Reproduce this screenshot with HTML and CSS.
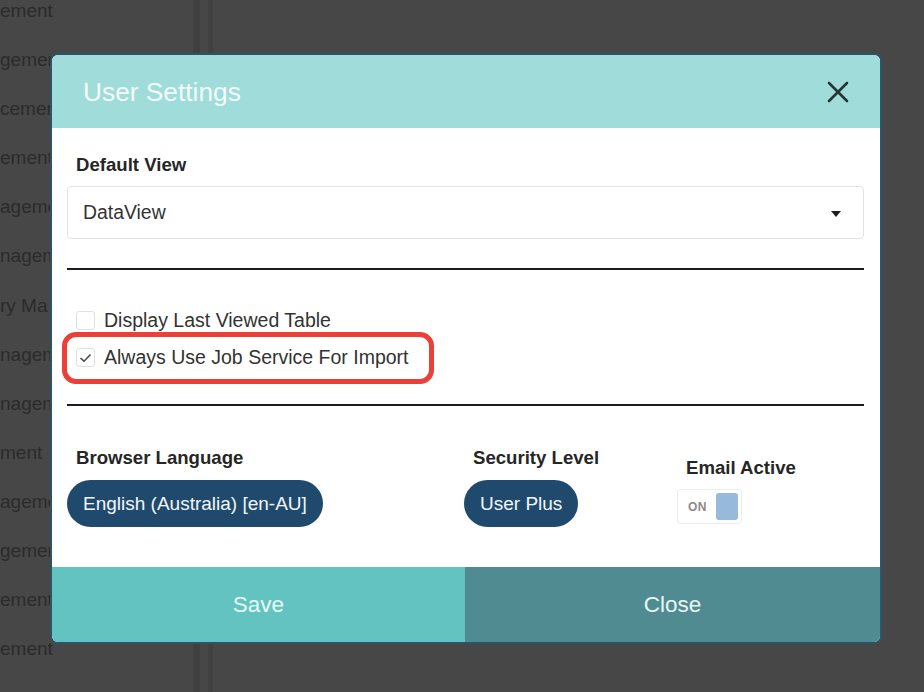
FILE: index.html
```html
<!DOCTYPE html>
<html lang="en">
<head>
<meta charset="utf-8">
<title>User Settings</title>
<link rel="stylesheet" href="styles.css">
</head>
<body>
<div class="app">
  <nav class="sidebar">
    <div class="nav-item">ement</div>
    <div class="nav-item">gement</div>
    <div class="nav-item">cement</div>
    <div class="nav-item">ement</div>
    <div class="nav-item">ageme</div>
    <div class="nav-item">nagem</div>
    <div class="nav-item">ry Ma</div>
    <div class="nav-item">nagem</div>
    <div class="nav-item">nagem</div>
    <div class="nav-item">ment</div>
    <div class="nav-item">ageme</div>
    <div class="nav-item">gemen</div>
    <div class="nav-item">ement</div>
    <div class="nav-item">ement</div>
  </nav>
  <div class="divider"></div>
  <main class="content"></main>
</div>

<div class="modal">
  <header class="modal-header">
    <h1 class="modal-title">User Settings</h1>
    <button class="icon-close" aria-label="Close">
      <svg width="22" height="22" viewBox="0 0 22 22"><path d="M2 2 L20 20 M20 2 L2 20" stroke="#253535" stroke-width="2.6" stroke-linecap="round" fill="none"/></svg>
    </button>
  </header>

  <section class="modal-body">
    <label class="field-label">Default View</label>
    <div class="select">
      <span class="select-value">DataView</span>
      <span class="caret"></span>
    </div>

    <hr class="rule rule-top">

    <div class="check-row">
      <span class="checkbox"></span>
      <span class="check-text">Display Last Viewed Table</span>
    </div>
    <div class="check-row highlighted">
      <span class="checkbox checked">
        <svg width="13" height="10" viewBox="0 0 13 10"><path d="M1.5 5 L5 8.2 L11.5 1.5" stroke="#4a4a4a" stroke-width="1.6" fill="none"/></svg>
      </span>
      <span class="check-text">Always Use Job Service For Import</span>
      <span class="annotation"></span>
    </div>

    <hr class="rule rule-bottom">

    <div class="prefs">
      <div class="pref">
        <div class="field-label">Browser Language</div>
        <span class="pill">English (Australia) [en-AU]</span>
      </div>
      <div class="pref">
        <div class="field-label">Security Level</div>
        <span class="pill">User Plus</span>
      </div>
      <div class="pref pref-email">
        <div class="field-label">Email Active</div>
        <div class="toggle">
          <span class="toggle-text">ON</span>
          <span class="toggle-knob"></span>
        </div>
      </div>
    </div>
  </section>

  <footer class="modal-footer">
    <button class="btn btn-save">Save</button>
    <button class="btn btn-close">Close</button>
  </footer>
</div>
</body>
</html>
```

FILE: styles.css
```css
* {
  box-sizing: border-box;
}

html, body {
  margin: 0;
  height: 100%;
}

body {
  background: #474747;
  font-family: "Liberation Sans", Arial, sans-serif;
  overflow: hidden;
}

/* page behind the dimmed overlay */
.app {
  display: flex;
  height: 692px;
}

.sidebar {
  width: 200px;
  border-right: 7px solid #404040;
}

.nav-item {
  height: 49.1px;
  line-height: 22px;
  font-size: 19px;
  color: #2b2b2b;
  white-space: nowrap;
  overflow: hidden;
}

.divider {
  width: 13px;
  border-right: 5px solid #414141;
}

.content {
  flex: 1;
}

/* dialog */
.modal {
  position: absolute;
  left: 52px;
  top: 55px;
  width: 828px;
  height: 587px;
  background: #fff;
  border-radius: 6px;
  box-shadow: 0 0 0 2px #2d5366;
  overflow: hidden;
  display: flex;
  flex-direction: column;
}

.modal-header {
  height: 73px;
  background: #a0dcda;
  display: flex;
  align-items: center;
  justify-content: space-between;
  padding: 0 31px 0 31px;
}

.modal-title {
  margin: 0;
  font-size: 26.3px;
  font-weight: normal;
  color: #f3fbfb;
  padding-top: 2px;
}

.icon-close {
  background: none;
  border: 0;
  padding: 0;
  width: 22px;
  height: 22px;
  cursor: pointer;
}

.modal-body {
  flex: 1;
  padding: 26px 16px 0 15px;
}

.field-label {
  display: block;
  font-size: 18.6px;
  font-weight: bold;
  line-height: 22px;
  color: #262626;
  padding-left: 9px;
}

.select {
  margin-top: 10px;
  height: 53px;
  border: 1px solid #e3e3e3;
  border-radius: 4px;
  display: flex;
  align-items: center;
  justify-content: space-between;
  padding: 0 22px 0 15px;
}

.select-value {
  font-size: 19.4px;
  color: #333;
}

.caret {
  width: 0;
  height: 0;
  border-left: 5px solid transparent;
  border-right: 5px solid transparent;
  border-top: 6px solid #1e1e1e;
  margin-top: 2px;
}

.rule {
  border: 0;
  height: 2px;
  background: #1c1c1c;
  margin: 0;
}

.rule-top {
  margin-top: 29px;
  margin-bottom: 32px;
}

.rule-bottom {
  margin-top: 28px;
}

.check-row {
  height: 37px;
  display: flex;
  align-items: center;
  padding-left: 9px;
  position: relative;
}

.checkbox {
  width: 19px;
  height: 19px;
  border: 1px solid #e0e0e0;
  border-radius: 3px;
  display: flex;
  align-items: center;
  justify-content: center;
  margin-right: 9px;
}

.check-text {
  font-size: 19.5px;
  color: #333;
}

/* red call-out drawn around the job-service option */
.annotation {
  position: absolute;
  left: -5px;
  top: -7px;
  width: 372px;
  height: 52px;
  border: 5px solid #ea4038;
  border-radius: 14px;
}

.prefs {
  display: grid;
  grid-template-columns: 397px 213px 1fr;
  margin-top: 41px;
}

.pref .field-label {
  margin-bottom: 11px;
}

.pref-email {
  padding-top: 10px;
}

.pref-email .field-label {
  margin-bottom: 10px;
}

.pill {
  display: inline-flex;
  align-items: center;
  height: 47px;
  padding: 0 16px;
  border-radius: 24px;
  background: #204a6d;
  color: #f2f6fa;
  font-size: 19px;
}

.toggle {
  width: 65px;
  height: 35px;
  border: 1px solid #ededed;
  border-radius: 3px;
  display: flex;
  align-items: center;
  justify-content: space-between;
  padding: 0 3px 0 10px;
}

.toggle-text {
  font-size: 12px;
  font-weight: bold;
  color: #8a8a8a;
  letter-spacing: 0.5px;
}

.toggle-knob {
  width: 22px;
  height: 27px;
  border-radius: 3px;
  background: #96b9dc;
}

.modal-footer {
  height: 75px;
  display: flex;
}

.btn {
  border: 0;
  margin: 0;
  font-family: inherit;
  font-size: 22.5px;
  cursor: pointer;
}

.btn-save {
  width: 413px;
  background: #62c3c0;
  color: #eaf9f8;
}

.btn-close {
  flex: 1;
  background: #4f8b90;
  color: #e8f5f5;
}
```
